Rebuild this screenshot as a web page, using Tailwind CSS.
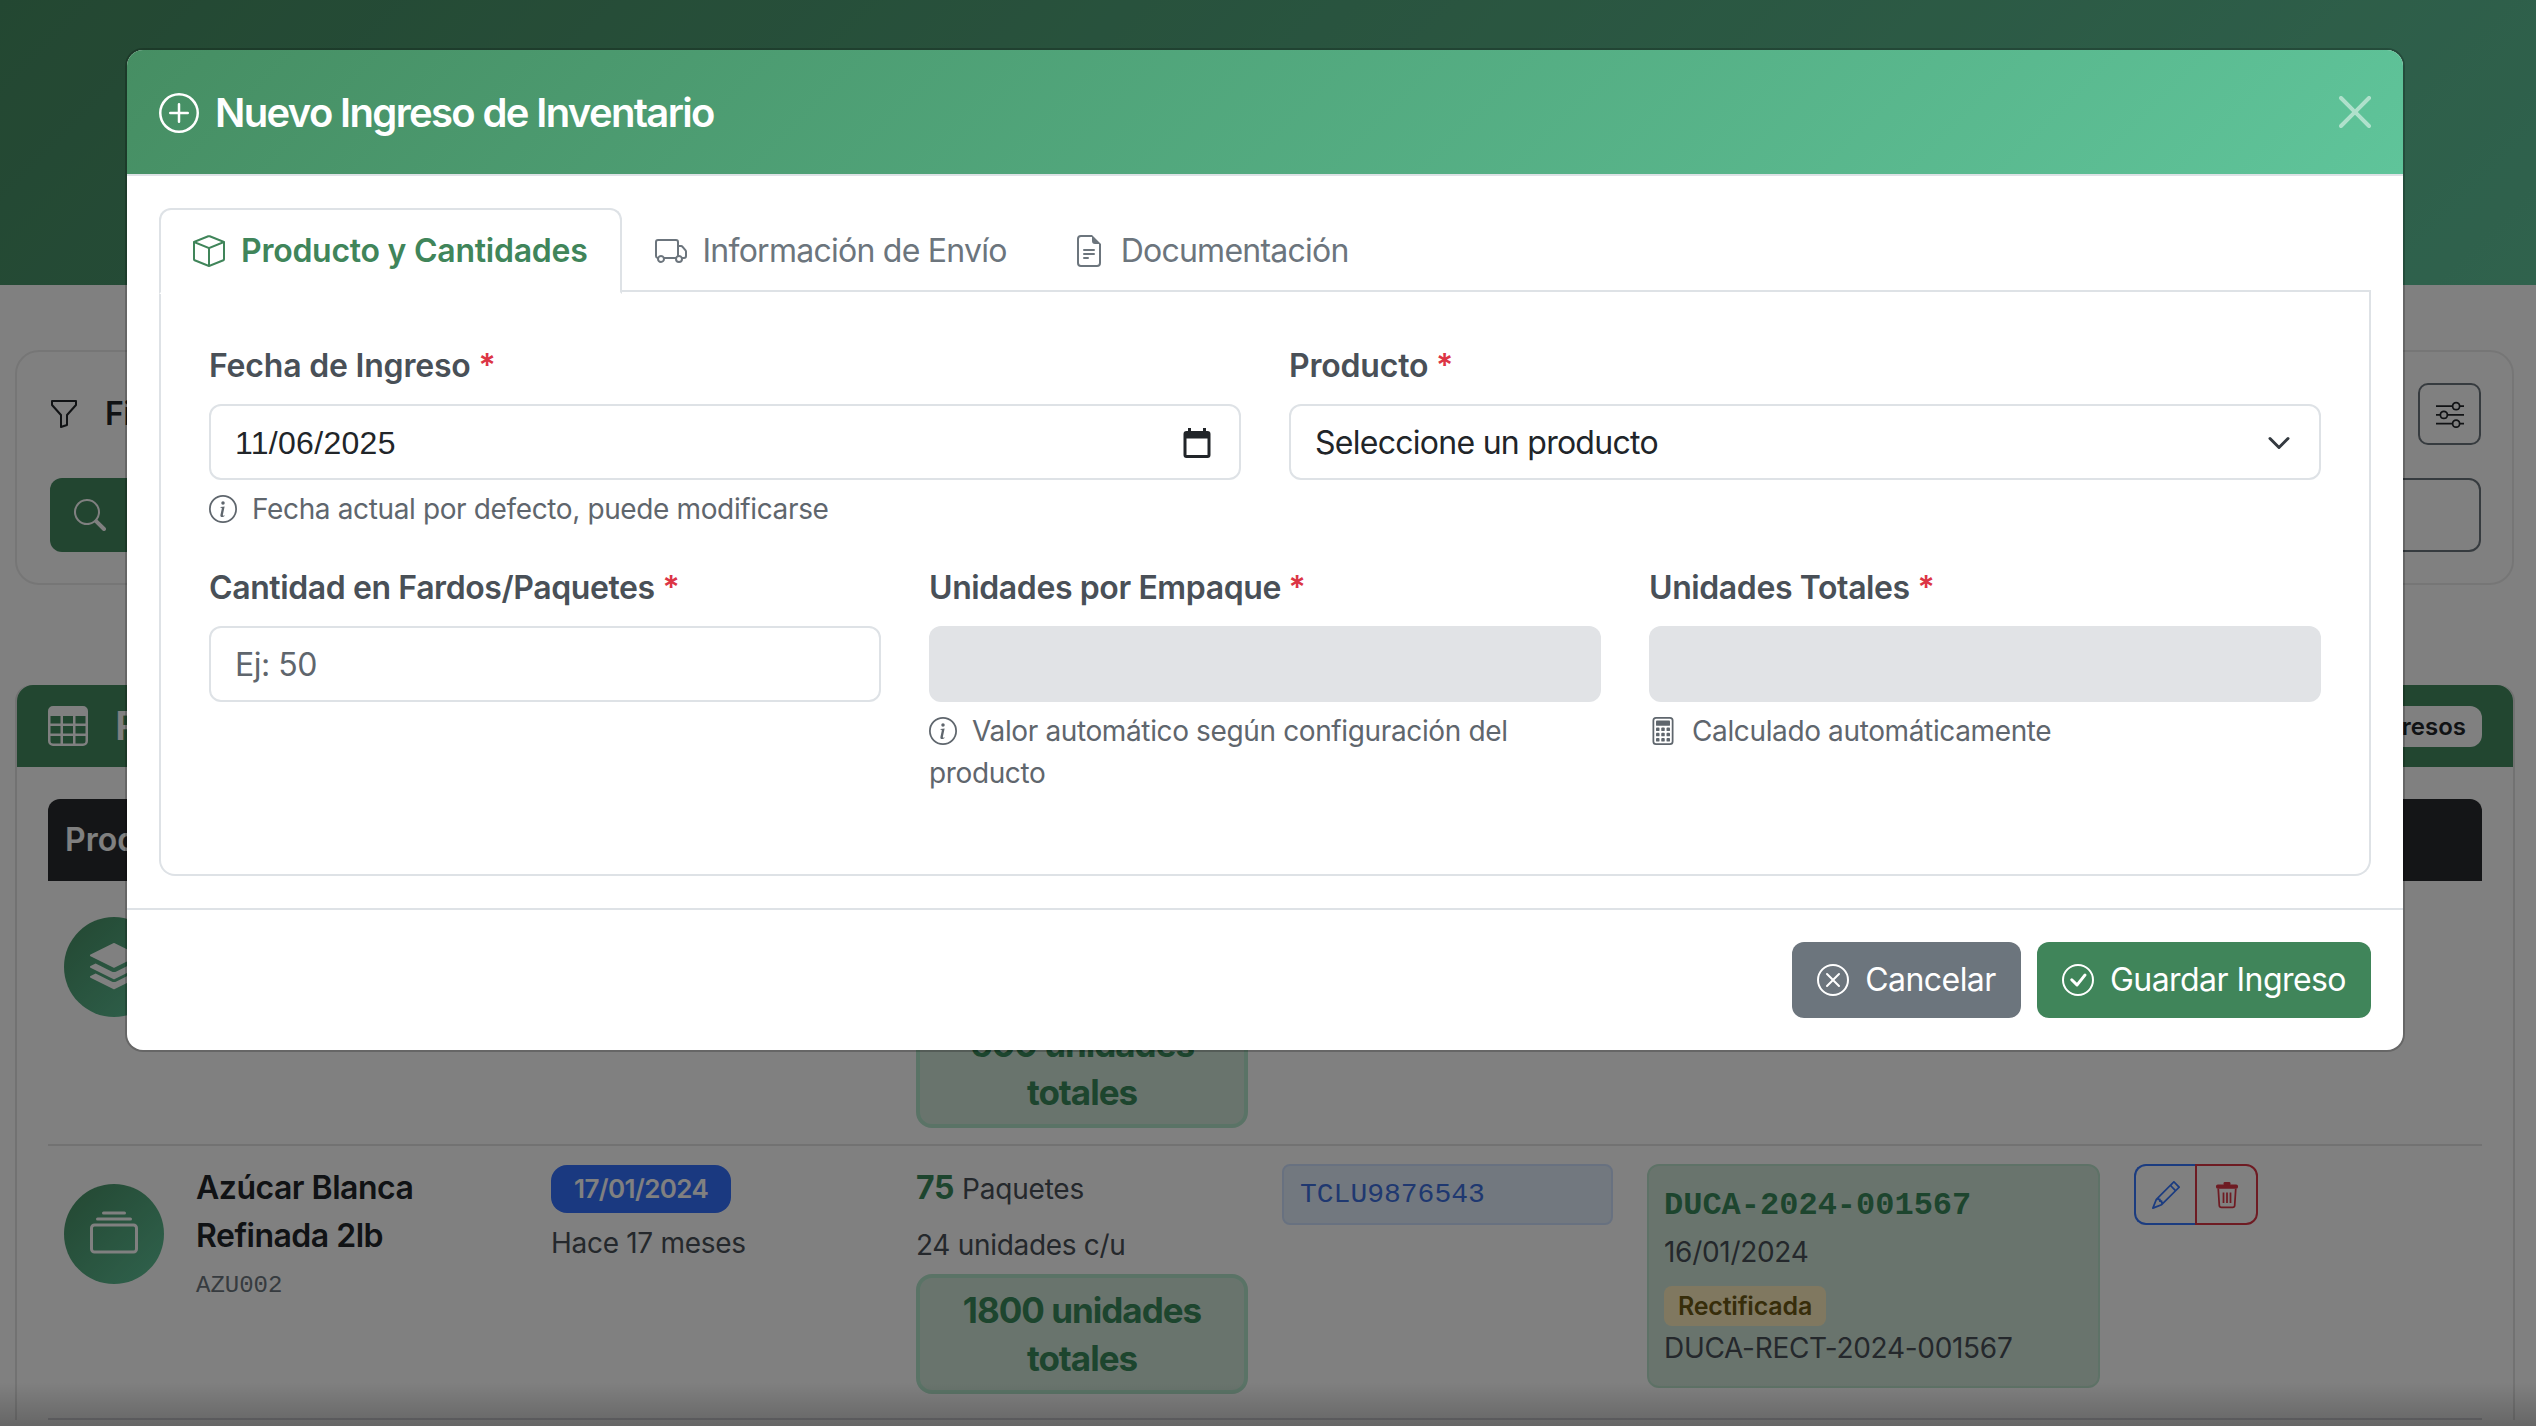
<!DOCTYPE html>
<html lang="es">

<head>
    <meta charset="UTF-8">
    <title>Nuevo Ingreso de Inventario</title>
    <script src="https://cdn.jsdelivr.net/npm/@tailwindcss/browser@4"></script>
</head>

<body class="relative h-[1426px] overflow-hidden bg-white font-['Inter',sans-serif] text-[32px] leading-[48px] text-[#212529]">
    <!-- Page behind the modal -->
    <header class="h-[285px] bg-linear-[135deg,#468e63,#5fc49a]"></header>

    <div class="mx-[15px] mt-[65px] flex h-[235px] w-[2499px] flex-col gap-[33px] rounded-[24px] border-2 border-[#ececec] p-[31px]">
        <div class="flex h-[62px] items-center justify-between">
            <div class="flex items-center gap-[25px] font-semibold tracking-[-0.35px]">
                <svg class="h-[32px] w-[32px]" viewBox="0 0 16 16" fill="currentColor"><path d="M1.5 1.5A.5.5 0 0 1 2 1h12a.5.5 0 0 1 .5.5v2a.5.5 0 0 1-.128.334L10 8.692V13.5a.5.5 0 0 1-.342.474l-3 1A.5.5 0 0 1 6 14.5V8.692L1.628 3.834A.5.5 0 0 1 1.5 3.5v-2zm1 .5v1.308l4.372 4.858A.5.5 0 0 1 7 8.5v5.306l2-.666V8.5a.5.5 0 0 1 .128-.334L13.5 3.308V2h-11z"/></svg>
                <span>Filtros</span>
            </div>
            <div class="flex h-[62px] w-[63px] items-center justify-center rounded-[10px] border-2 border-[#6c757d]">
                <svg class="h-[28px] w-[28px]" viewBox="0 0 16 16" fill="currentColor"><path d="M11.5 2a1.5 1.5 0 1 0 0 3 1.5 1.5 0 0 0 0-3zM9.05 3a2.5 2.5 0 0 1 4.9 0H16v1h-2.05a2.5 2.5 0 0 1-4.9 0H0V3h9.05zM4.5 7a1.5 1.5 0 1 0 0 3 1.5 1.5 0 0 0 0-3zM2.05 8a2.5 2.5 0 0 1 4.9 0H16v1H6.95a2.5 2.5 0 0 1-4.9 0H0V8h2.05zm9.45 4a1.5 1.5 0 1 0 0 3 1.5 1.5 0 0 0 0-3zm-2.45 1a2.5 2.5 0 0 1 4.9 0H16v1h-2.05a2.5 2.5 0 0 1-4.9 0H0v-1h9.05z"/></svg>
            </div>
        </div>
        <div class="ml-[2px] flex h-[74px]">
            <div class="flex w-[100px] items-center rounded-l-[12px] bg-[#448a60] pl-[24px] text-white">
                <svg class="h-[32px] w-[32px]" viewBox="0 0 16 16" fill="currentColor"><path d="M11.742 10.344a6.5 6.5 0 1 0-1.397 1.398h-.001c.03.04.062.078.098.115l3.85 3.85a1 1 0 0 0 1.415-1.414l-3.85-3.85a1.007 1.007 0 0 0-.115-.1zM12 6.5a5.5 5.5 0 1 1-11 0 5.5 5.5 0 0 1 11 0z"/></svg>
            </div>
            <div class="flex-1 rounded-r-[12px] border-2 border-[#6c757d]"></div>
        </div>
    </div>

    <div class="mx-[15px] mt-[100px] w-[2500px] rounded-t-[16px] border-x-2 border-[#e4e4e4]">
        <div class="flex h-[82px] items-center justify-between rounded-t-[16px] bg-[#448c60] px-[31px] text-white">
            <div class="flex items-center gap-[27px] text-[40px] font-semibold">
                <svg class="h-[40px] w-[40px]" viewBox="0 0 16 16" fill="currentColor"><path d="M0 2a2 2 0 0 1 2-2h12a2 2 0 0 1 2 2v12a2 2 0 0 1-2 2H2a2 2 0 0 1-2-2V2zm15 2h-4v3h4V4zm0 4h-4v3h4V8zm0 4h-4v3h3a1 1 0 0 0 1-1v-2zm-5 3v-3H6v3h4zm-5 0v-3H1v2a1 1 0 0 0 1 1h3zm-4-4h4V8H1v3zm0-4h4V4H1v3zm5-3v3h4V4H6zm4 4H6v3h4V8z"/></svg>
                <span>Registro</span>
            </div>
            <span class="rounded-[12px] bg-white px-[16px] text-[24px] leading-[41px] font-semibold text-[#212529]">2 ingresos</span>
        </div>

        <div class="px-[31px] pt-[32px]">
            <div class="grid h-[82px] grid-cols-[503px_365px_366px_365px_487px_348px] items-center rounded-t-[12px] bg-[#282a2e] font-semibold text-white">
                <div class="pl-[17px]">Producto</div>
            </div>

            <!-- Row 1 -->
            <div class="grid grid-cols-[503px_365px_366px_365px_487px_348px] border-b-2 border-[#e4e4e4] pt-[16px] pb-[16px]">
                <div class="flex items-center gap-[32px] self-start pt-[20px] pl-[16px]">
                    <div class="flex h-[100px] w-[100px] shrink-0 items-center justify-center rounded-full bg-linear-[135deg,#468e63,#5fc49a] text-white">
                        <svg class="h-[48px] w-[48px]" viewBox="0 0 16 16" fill="currentColor"><path d="m14.12 10.163 1.715.858c.22.11.22.424 0 .534L8.267 15.34a.598.598 0 0 1-.534 0L.165 11.555a.299.299 0 0 1 0-.534l1.716-.858 5.317 2.659c.505.252 1.1.252 1.604 0l5.317-2.66zM7.733.063a.598.598 0 0 1 .534 0l7.568 3.784a.3.3 0 0 1 0 .535L8.267 8.165a.598.598 0 0 1-.534 0L.165 4.382a.299.299 0 0 1 0-.535L7.733.063z"/><path d="M.165 7.7l1.716-.86 5.317 2.66c.505.25 1.1.25 1.604 0l5.317-2.66 1.715.86c.22.11.22.42 0 .53L8.267 12a.6.6 0 0 1-.534 0L.165 8.23a.3.3 0 0 1 0-.53z"/></svg>
                    </div>
                </div>
                <div></div>
                <div class="flex h-[231px] flex-col justify-end">
                    <div class="flex h-[120px] w-[332px] flex-col justify-center rounded-[16px] border-4 border-[#b4e6cc] bg-[#d2e8da] text-center text-[35px] font-bold tracking-[-1px] text-[#3a8a5c]">
                        <span>600 unidades</span>
                        <span>totales</span>
                    </div>
                </div>
            </div>

            <!-- Row 2 -->
            <div class="grid grid-cols-[503px_365px_366px_365px_487px_348px] border-b-2 border-[#d8d8de] pt-[18px] pb-[24px]">
                <div class="flex items-center gap-[32px] self-start pl-[16px]">
                    <div class="flex h-[100px] w-[100px] shrink-0 items-center justify-center rounded-full bg-linear-[135deg,#468e63,#5fc49a] text-white">
                        <svg class="h-[48px] w-[48px]" viewBox="0 0 16 16" fill="currentColor"><path d="M2.5 3.5a.5.5 0 0 1 0-1h11a.5.5 0 0 1 0 1h-11zm2-2a.5.5 0 0 1 0-1h7a.5.5 0 0 1 0 1h-7zM0 13a1.5 1.5 0 0 0 1.5 1.5h13A1.5 1.5 0 0 0 16 13V6a1.5 1.5 0 0 0-1.5-1.5h-13A1.5 1.5 0 0 0 0 6v7zm1.5.5A.5.5 0 0 1 1 13V6a.5.5 0 0 1 .5-.5h13a.5.5 0 0 1 .5.5v7a.5.5 0 0 1-.5.5h-13z"/></svg>
                    </div>
                    <div class="w-[300px]">
                        <div class="font-semibold tracking-[-0.5px]">Azúcar Blanca Refinada 2lb</div>
                        <div class="mt-[8px] font-['Liberation_Mono',monospace] text-[24px] leading-[36px] text-[#6c757d]">AZU002</div>
                    </div>
                </div>
                <div class="flex flex-col items-start">
                    <span class="mt-[1px] rounded-[16px] bg-[#3371ff] px-[23px] text-[26px] leading-[48px] font-semibold tracking-[-0.6px] text-white">17/01/2024</span>
                    <span class="mt-[9px] text-[28px] leading-[42px] tracking-[-0.3px] text-[#495057]">Hace 17 meses</span>
                </div>
                <div class="flex flex-col">
                    <div class="text-[28px] tracking-[-0.2px] text-[#495057]"><b class="text-[32px] font-bold text-[#3a8a5c]">75</b> Paquetes</div>
                    <div class="mt-[11px] text-[28px] leading-[42px] tracking-[-0.3px] text-[#495057]">24 unidades c/u</div>
                    <div class="mt-[8px] flex h-[120px] w-[332px] flex-col justify-center rounded-[16px] border-4 border-[#b4e6cc] bg-[#d2e8da] text-center text-[35px] font-bold tracking-[-1px] text-[#3a8a5c]">
                        <span>1800 unidades</span>
                        <span>totales</span>
                    </div>
                </div>
                <div>
                    <div class="flex h-[61px] w-[331px] items-center rounded-[8px] border-2 border-[#cfe2ff] bg-[#e4f0fe] pl-[16px] font-['Liberation_Mono',monospace] text-[28px] text-[#3d6fe0]">TCLU9876543</div>
                </div>
                <div>
                    <div class="flex h-[224px] w-[453px] flex-col rounded-[12px] border-2 border-[#bce4cd] bg-[#d2e8da] px-[15px] pt-[16px]">
                        <div class="font-['Liberation_Mono',monospace] font-bold text-[#3a8a5c]">DUCA-2024-001567</div>
                        <div class="mt-[1px] text-[28px] leading-[42px] tracking-[-0.3px] text-[#495057]">16/01/2024</div>
                        <span class="mt-[13px] self-start rounded-[8px] bg-[#fff0c0] px-[14px] text-[25px] leading-[40px] font-semibold tracking-[-0.2px] text-[#6e5a14]">Rectificada</span>
                        <div class="mt-[1px] text-[28px] leading-[42px] tracking-[-0.3px] text-[#495057]">DUCA-RECT-2024-001567</div>
                    </div>
                </div>
                <div class="flex items-start">
                    <div class="flex h-[61px] w-[61px] items-center justify-center rounded-l-[12px] border-y-2 border-l-2 border-[#3678ff] text-[#3678ff]">
                        <svg class="h-[28px] w-[28px]" viewBox="0 0 16 16" fill="currentColor"><path d="M12.146.146a.5.5 0 0 1 .708 0l3 3a.5.5 0 0 1 0 .708l-10 10a.5.5 0 0 1-.168.11l-5 2a.5.5 0 0 1-.65-.65l2-5a.5.5 0 0 1 .11-.168l10-10zM11.207 2.5 13.5 4.793 14.793 3.5 12.5 1.207 11.207 2.5zm1.586 3L10.5 3.207 4 9.707V10h.5a.5.5 0 0 1 .5.5v.5h.5a.5.5 0 0 1 .5.5v.5h.293l6.5-6.5zm-9.761 5.175-.106.106-1.528 3.821 3.821-1.528.106-.106A.5.5 0 0 1 5 12.5V12h-.5a.5.5 0 0 1-.5-.5V11h-.5a.5.5 0 0 1-.468-.325z"/></svg>
                    </div>
                    <div class="flex h-[61px] w-[63px] items-center justify-center rounded-r-[12px] border-2 border-[#dc3545] text-[#dc3545]">
                        <svg class="h-[28px] w-[28px]" viewBox="0 0 16 16" fill="currentColor"><rect x="1.7" y="2" width="12.6" height="2.4" rx="1"/><rect x="6" y=".5" width="4" height="2" rx=".8"/><path d="M3 4.4l.6 9.6a1.2 1.2 0 0 0 1.2 1.1h6.4a1.2 1.2 0 0 0 1.2-1.1l.6-9.6" fill="none" stroke="currentColor"/><path d="M6 6.5v6M8 6.5v6M10 6.5v6" fill="none" stroke="currentColor"/></svg>
                    </div>
                </div>
            </div>
        </div>
    </div>

    <!-- Backdrop -->
    <div class="absolute inset-0 bg-linear-to-b from-black/50 from-[97%] to-black/60"></div>

    <!-- Modal -->
    <div class="absolute top-[50px] left-[127px] w-[2276px] overflow-hidden rounded-[16px] bg-white ring-2 ring-black/20">
        <div class="flex h-[126px] items-center justify-between border-b-2 border-[#dee2e6] bg-linear-[135deg,#468e63,#5fc49a] px-[32px] text-white">
            <div class="flex items-center gap-[16px] pt-[2px] text-[40px] leading-[60px] font-semibold tracking-[-1.65px]">
                <svg class="h-[40px] w-[40px]" viewBox="0 0 16 16" fill="currentColor"><path d="M8 15A7 7 0 1 1 8 1a7 7 0 0 1 0 14zm0 1A8 8 0 1 0 8 0a8 8 0 0 0 0 16z"/><path d="M8 4a.5.5 0 0 1 .5.5v3h3a.5.5 0 0 1 0 1h-3v3a.5.5 0 0 1-1 0v-3h-3a.5.5 0 0 1 0-1h3v-3A.5.5 0 0 1 8 4z"/></svg>
                <span>Nuevo Ingreso de Inventario</span>
            </div>
            <svg class="h-[32px] w-[32px] text-white/50" viewBox="0 0 16 16" fill="currentColor"><path d="M.293.293a1 1 0 0 1 1.414 0L8 6.586 14.293.293a1 1 0 1 1 1.414 1.414L9.414 8l6.293 6.293a1 1 0 0 1-1.414 1.414L8 9.414l-6.293 6.293a1 1 0 0 1-1.414-1.414L6.586 8 .293 1.707a1 1 0 0 1 0-1.414z"/></svg>
        </div>

        <div class="px-[32px] pt-[32px] pb-[32px]">
            <!-- Tabs -->
            <div class="flex h-[84px] border-b-2 border-[#dee2e6]">
                <div class="-mb-[2px] flex h-[86px] items-center gap-[16px] rounded-t-[12px] border-2 border-b-white border-[#dee2e6] bg-white px-[32px] font-semibold tracking-[-0.25px] text-[#40855a]">
                    <svg class="h-[32px] w-[32px]" viewBox="0 0 16 16" fill="currentColor"><path d="M8.186 1.113a.5.5 0 0 0-.372 0L1.846 3.5 8 5.961 14.154 3.5 8.186 1.113zM15 4.239l-6.5 2.6v7.922l6.5-2.6V4.24zM7.5 14.762V6.838L1 4.239v7.925l6.5 2.6zM7.443.184a1.5 1.5 0 0 1 1.114 0l7.129 2.852A.5.5 0 0 1 16 3.5v8.662a1 1 0 0 1-.629.928l-7.185 2.874a.5.5 0 0 1-.372 0L.63 13.09a1 1 0 0 1-.63-.928V3.5a.5.5 0 0 1 .314-.464L7.443.184z"/></svg>
                    <span>Producto y Cantidades</span>
                </div>
                <div class="flex items-center gap-[16px] px-[33px] pt-[4px] tracking-[-0.75px] text-[#6c757d]">
                    <svg class="h-[32px] w-[32px]" viewBox="0 0 16 16" fill="currentColor"><path d="M0 3.5A1.5 1.5 0 0 1 1.5 2h9A1.5 1.5 0 0 1 12 3.5V5h1.02a1.5 1.5 0 0 1 1.17.563l1.481 1.85a1.5 1.5 0 0 1 .329.938V10.5a1.5 1.5 0 0 1-1.5 1.5H14a2 2 0 1 1-4 0H5a2 2 0 1 1-3.998-.085A1.5 1.5 0 0 1 0 10.5v-7zm1.294 7.456A1.999 1.999 0 0 1 4.732 11h5.536a2.01 2.01 0 0 1 .732-.732V3.5a.5.5 0 0 0-.5-.5h-9a.5.5 0 0 0-.5.5v7a.5.5 0 0 0 .294.456zM12 10a2 2 0 0 1 1.732 1h.768a.5.5 0 0 0 .5-.5V8.35a.5.5 0 0 0-.11-.312l-1.48-1.85A.5.5 0 0 0 13.02 6H12v4zm-9 1a1 1 0 1 0 0 2 1 1 0 0 0 0-2zm9 0a1 1 0 1 0 0 2 1 1 0 0 0 0-2z"/></svg>
                    <span>Información de Envío</span>
                </div>
                <div class="flex items-center gap-[16px] px-[33px] pt-[4px] tracking-[-0.75px] text-[#6c757d]">
                    <svg class="h-[32px] w-[32px]" viewBox="0 0 16 16" fill="currentColor"><path d="M5.5 7a.5.5 0 0 0 0 1h5a.5.5 0 0 0 0-1h-5zM5 9.5a.5.5 0 0 1 .5-.5h5a.5.5 0 0 1 0 1h-5a.5.5 0 0 1-.5-.5zm0 2a.5.5 0 0 1 .5-.5h2a.5.5 0 0 1 0 1h-2a.5.5 0 0 1-.5-.5z"/><path d="M9.5 0H4a2 2 0 0 0-2 2v12a2 2 0 0 0 2 2h8a2 2 0 0 0 2-2V4.5L9.5 0zm0 1v2A1.5 1.5 0 0 0 11 4.5h2V14a1 1 0 0 1-1 1H4a1 1 0 0 1-1-1V2a1 1 0 0 1 1-1h5.5z"/></svg>
                    <span>Documentación</span>
                </div>
            </div>

            <!-- Tab panel -->
            <div class="rounded-b-[16px] border-x-2 border-b-2 border-[#dee2e6] px-[48px] pt-[48px] pb-[80px]">
                <div class="grid grid-cols-2 gap-x-[48px]">
                    <div>
                        <div class="mb-[14px] pt-[2px] font-semibold tracking-[-0.2px] text-[#495057]">Fecha de Ingreso <span class="text-[#dc3545]">*</span></div>
                        <div class="flex h-[76px] items-center justify-between rounded-[12px] border-2 border-[#dee2e6] pt-[2px] pr-[24px] pl-[24px] font-['Liberation_Sans',sans-serif] tracking-[0.3px]">
                            <span>11/06/2025</span>
                            <svg class="h-[36px] w-[36px]" viewBox="0 0 24 24" fill="currentColor"><path d="M19 4h-1V2h-2v2H8V2H6v2H5a2 2 0 0 0-2 2v14a2 2 0 0 0 2 2h14a2 2 0 0 0 2-2V6a2 2 0 0 0-2-2zm0 16H5V9h14v11z"/></svg>
                        </div>
                        <div class="mt-[8px] flex items-center gap-[15px] text-[28px] leading-[42px] tracking-[-0.37px] text-[#5f666d]">
                            <svg class="h-[28px] w-[28px]" viewBox="0 0 16 16" fill="currentColor"><path d="M8 15A7 7 0 1 1 8 1a7 7 0 0 1 0 14zm0 1A8 8 0 1 0 8 0a8 8 0 0 0 0 16z"/><path d="m8.93 6.588-2.29.287-.082.38.45.083c.294.07.352.176.288.469l-.738 3.468c-.194.897.105 1.319.808 1.319.545 0 1.178-.252 1.465-.598l.088-.416c-.2.176-.492.246-.686.246-.275 0-.375-.193-.304-.533L8.93 6.588zM9 4.5a1 1 0 1 1-2 0 1 1 0 0 1 2 0z"/></svg>
                            <span>Fecha actual por defecto, puede modificarse</span>
                        </div>
                    </div>
                    <div>
                        <div class="mb-[14px] pt-[2px] font-semibold tracking-[-0.2px] text-[#495057]">Producto <span class="text-[#dc3545]">*</span></div>
                        <div class="flex h-[76px] items-center justify-between rounded-[12px] border-2 border-[#dee2e6] pt-[2px] pr-[28px] pl-[24px] tracking-[-0.73px]">
                            <span>Seleccione un producto</span>
                            <svg class="h-[24px] w-[24px] text-[#343a40]" viewBox="0 0 16 16" fill="none" stroke="currentColor" stroke-width="2" stroke-linecap="round" stroke-linejoin="round"><path d="m2 5 6 6 6-6"/></svg>
                        </div>
                    </div>
                </div>

                <div class="mt-[32px] grid grid-cols-3 gap-x-[48px]">
                    <div>
                        <div class="mb-[14px] pt-[2px] font-semibold tracking-[-0.4px] text-[#495057]">Cantidad en Fardos/Paquetes <span class="text-[#dc3545]">*</span></div>
                        <div class="flex h-[76px] items-center rounded-[12px] border-2 border-[#dee2e6] pt-[2px] pl-[24px] tracking-[-0.5px] text-[#5f666d]">Ej: 50</div>
                    </div>
                    <div>
                        <div class="mb-[14px] pt-[2px] font-semibold tracking-[-0.4px] text-[#495057]">Unidades por Empaque <span class="text-[#dc3545]">*</span></div>
                        <div class="h-[76px] rounded-[12px] bg-[#e1e3e6]"></div>
                        <div class="mt-[8px] text-[28px] leading-[42px] tracking-[-0.37px] text-[#5f666d]">
                            <svg class="mr-[15px] inline h-[28px] w-[28px] align-[-4px]" viewBox="0 0 16 16" fill="currentColor"><path d="M8 15A7 7 0 1 1 8 1a7 7 0 0 1 0 14zm0 1A8 8 0 1 0 8 0a8 8 0 0 0 0 16z"/><path d="m8.93 6.588-2.29.287-.082.38.45.083c.294.07.352.176.288.469l-.738 3.468c-.194.897.105 1.319.808 1.319.545 0 1.178-.252 1.465-.598l.088-.416c-.2.176-.492.246-.686.246-.275 0-.375-.193-.304-.533L8.93 6.588zM9 4.5a1 1 0 1 1-2 0 1 1 0 0 1 2 0z"/></svg>Valor automático según configuración del producto
                        </div>
                    </div>
                    <div>
                        <div class="mb-[14px] pt-[2px] font-semibold tracking-[-0.4px] text-[#495057]">Unidades Totales <span class="text-[#dc3545]">*</span></div>
                        <div class="h-[76px] rounded-[12px] bg-[#e1e3e6]"></div>
                        <div class="mt-[8px] flex items-center gap-[15px] text-[28px] leading-[42px] tracking-[-0.37px] text-[#5f666d]">
                            <svg class="h-[28px] w-[28px]" viewBox="0 0 16 16" fill="currentColor"><path d="M12 1a1 1 0 0 1 1 1v12a1 1 0 0 1-1 1H4a1 1 0 0 1-1-1V2a1 1 0 0 1 1-1h8zM4 0a2 2 0 0 0-2 2v12a2 2 0 0 0 2 2h8a2 2 0 0 0 2-2V2a2 2 0 0 0-2-2H4z"/><path d="M4 2.5a.5.5 0 0 1 .5-.5h7a.5.5 0 0 1 .5.5v2a.5.5 0 0 1-.5.5h-7a.5.5 0 0 1-.5-.5v-2z"/><rect x="4" y="6" width="2" height="2" rx=".5"/><rect x="7" y="6" width="2" height="2" rx=".5"/><rect x="10" y="6" width="2" height="2" rx=".5"/><rect x="4" y="9" width="2" height="2" rx=".5"/><rect x="7" y="9" width="2" height="2" rx=".5"/><rect x="10" y="9" width="2" height="2" rx=".5"/><rect x="4" y="12" width="2" height="2" rx=".5"/><rect x="7" y="12" width="2" height="2" rx=".5"/><rect x="10" y="12" width="2" height="2" rx=".5"/></svg>
                            <span>Calculado automáticamente</span>
                        </div>
                    </div>
                </div>
            </div>
        </div>

        <!-- Footer -->
        <div class="flex justify-end gap-[16px] border-t-2 border-[#dee2e6] px-[32px] pt-[32px] pb-[32px] tracking-[-0.55px] text-white">
            <div class="flex h-[76px] w-[229px] items-center justify-center gap-[16px] rounded-[12px] bg-[#6c757d]">
                <svg class="h-[32px] w-[32px]" viewBox="0 0 16 16" fill="currentColor"><path d="M8 15A7 7 0 1 1 8 1a7 7 0 0 1 0 14zm0 1A8 8 0 1 0 8 0a8 8 0 0 0 0 16z"/><path d="M4.646 4.646a.5.5 0 0 1 .708 0L8 7.293l2.646-2.647a.5.5 0 0 1 .708.708L8.707 8l2.647 2.646a.5.5 0 0 1-.708.708L8 8.707l-2.646 2.647a.5.5 0 0 1-.708-.708L7.293 8 4.646 5.354a.5.5 0 0 1 0-.708z"/></svg>
                <span>Cancelar</span>
            </div>
            <div class="flex h-[76px] w-[334px] items-center justify-center gap-[16px] rounded-[12px] bg-[#40855a]">
                <svg class="h-[32px] w-[32px]" viewBox="0 0 16 16" fill="currentColor"><path d="M8 15A7 7 0 1 1 8 1a7 7 0 0 1 0 14zm0 1A8 8 0 1 0 8 0a8 8 0 0 0 0 16z"/><path d="M10.97 4.97a.235.235 0 0 0-.02.022L7.477 9.417 5.384 7.323a.75.75 0 0 0-1.06 1.06L6.97 11.03a.75.75 0 0 0 1.079-.02l3.992-4.99a.75.75 0 0 0-1.071-1.05z"/></svg>
                <span>Guardar Ingreso</span>
            </div>
        </div>
    </div>
</body>

</html>
